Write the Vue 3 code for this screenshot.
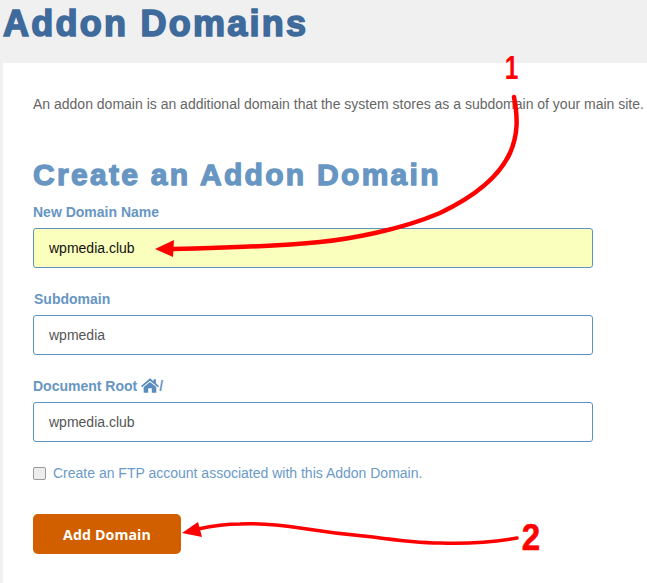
<script setup>
const fields = [
  { label: 'Subdomain', value: 'wpmedia', icon: false, cls: 'indented' },
  { label: 'Document Root', value: 'wpmedia.club', icon: true, cls: '' },
]
</script>

<template>
  <div class="page">
    <h1 class="title">Addon Domains</h1>
    <main class="card">
      <p class="intro">An addon domain is an additional domain that the system stores as a subdomain of your main site.</p>
      <h2 class="subtitle">Create an Addon Domain</h2>

      <div class="field first">
        <label class="label">New Domain Name</label>
        <div class="input filled">wpmedia.club</div>
      </div>

      <div v-for="f in fields" :key="f.label" class="field">
        <label class="label" :class="f.cls">{{ f.label }}
          <svg v-if="f.icon" class="home" viewBox="0 0 20 16" width="18" height="15">
            <path d="M10 0 L14 3.4 V1 H16.6 V5.6 L20 8.6 L18.8 10 L10 2.6 L1.2 10 L0 8.6 Z" fill="#5b8cbd" />
            <path d="M10 4 L17 9.8 V16 H12 V11 H8 V16 H3 V9.8 Z" fill="#5b8cbd" />
          </svg><span v-if="f.icon">/</span>
        </label>
        <div class="input">{{ f.value }}</div>
      </div>

      <label class="check">
        <span class="box"></span>
        <span>Create an FTP account associated with this Addon Domain.</span>
      </label>

      <button class="submit">Add Domain</button>
    </main>

    <svg class="marks" viewBox="0 0 647 583" width="647" height="583" fill="none">
      <path d="M514 97 C518 118 518 135 510 153 C500 175 478 195 440 213 C400 230 350 239 320 242 C280 246 220 248 172 249" stroke="#ff0000" stroke-width="4.5" stroke-linecap="round" />
      <path d="M155 249 L174 240 L173 257 Z" fill="#ff0000" />
      <path d="M182 533 L198 522 L202 537 Z" fill="#ff0000" />
      <path d="M198 529 C212 526 226 524 240 524 C262 523 280 525 300 528 C325 532 350 535 373 537 C395 540 418 543 440 543 C470 544 495 542 517 538" stroke="#ff0000" stroke-width="3.5" stroke-linecap="round" />
    </svg>
    <span class="mark mark-one">1</span>
    <span class="mark mark-two">2</span>
  </div>
</template>

<style scoped>
.page {
  position: relative;
  width: 647px;
  height: 583px;
  overflow: hidden;
  background: #f0f0f0;
  font-family: "Liberation Sans", Arial, sans-serif;
}
.title {
  margin: 0;
  height: 63px;
  padding-left: 3px;
  box-sizing: border-box;
  font-size: 36px;
  line-height: 48px;
  font-weight: 700;
  letter-spacing: 2.25px;
  color: #3f6a9c;
  -webkit-text-stroke: 1.6px #3f6a9c;
  white-space: nowrap;
}
.card {
  margin-left: 3px;
  height: 520px;
  box-sizing: border-box;
  padding: 33px 0 0 30px;
  background: #fff;
}
.intro {
  margin: 0;
  font-size: 14px;
  line-height: 16px;
  color: #666;
  white-space: nowrap;
}
.subtitle {
  margin: 45px 0 0;
  font-size: 30px;
  line-height: 36px;
  font-weight: 700;
  letter-spacing: 2.3px;
  color: #6796c3;
  -webkit-text-stroke: 1.3px #6796c3;
  white-space: nowrap;
}
.field {
  margin-top: 23px;
}
.field.first {
  margin-top: 11px;
}
.label {
  display: flex;
  align-items: center;
  gap: 4px;
  height: 16px;
  margin-bottom: 8px;
  font-size: 14px;
  line-height: 16px;
  font-weight: 700;
  color: #6796c3;
}
.label span {
  margin-left: -4px;
}
.indented {
  padding-left: 1px;
}
.home {
  margin-top: -1px;
}
.input {
  width: 560px;
  height: 40px;
  box-sizing: border-box;
  padding-left: 15px;
  border: 1px solid #5d92c2;
  border-radius: 3px;
  background: #fff;
  font-size: 14px;
  line-height: 38px;
  color: #555;
}
.input.filled {
  background: #fbffbd;
  color: #111;
}
.check {
  display: flex;
  align-items: center;
  gap: 7px;
  margin-top: 23px;
  height: 16px;
  font-size: 14px;
  line-height: 16px;
  color: #6a9ac8;
}
.box {
  width: 13px;
  height: 13px;
  box-sizing: border-box;
  border: 1px solid #9a9a9a;
  border-radius: 2px;
  background: #ededed;
}
.submit {
  display: block;
  margin-top: 33px;
  width: 148px;
  height: 40px;
  padding: 0;
  border: 0;
  border-radius: 5px;
  background: #d15f00;
  color: #fff;
  font-family: "Open Sans", "Liberation Sans", sans-serif;
  font-size: 14.2px;
  font-weight: 700;
  letter-spacing: 0.1px;
}
.marks {
  position: absolute;
  left: 0;
  top: 0;
  pointer-events: none;
}
.mark {
  position: absolute;
  font-family: "Liberation Sans", sans-serif;
  font-weight: 700;
  color: #ff0000;
}
.mark-one {
  left: 502px;
  top: 49px;
  font-size: 34px;
  line-height: 36px;
  transform: scaleX(0.72);
}
.mark-two {
  left: 521px;
  top: 518px;
  font-size: 36px;
  line-height: 40px;
  -webkit-text-stroke: 0.6px #ff0000;
  transform: scaleX(0.92);
}
</style>
